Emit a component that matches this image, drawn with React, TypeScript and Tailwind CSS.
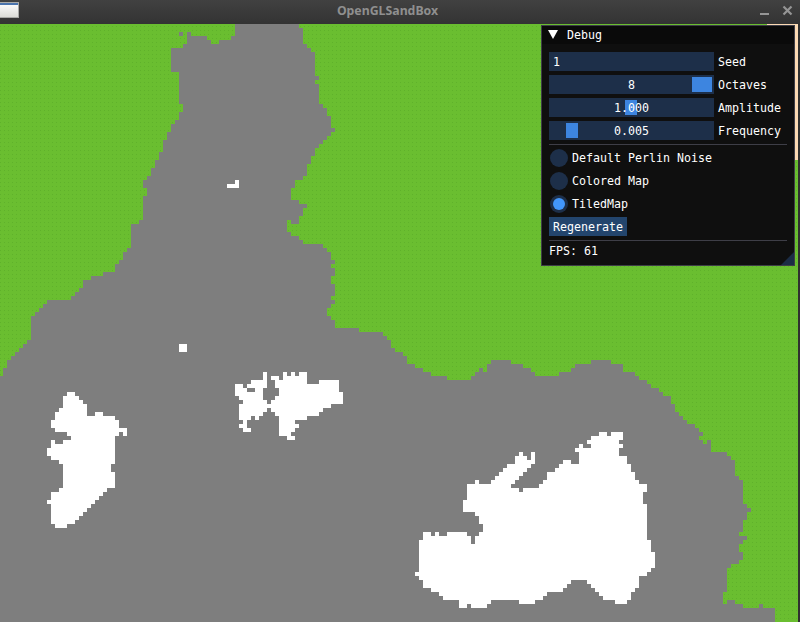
import React from "react";

const GRASS_WEST =
  "M0 24H235V36H231V40H219V44H211V40H207V36H191V32H187V44H183V48H171V72H179V104H183V112H179V120H175V124H171V132H167V140H163V152H159V160H155V168H151V176H147V180H143V188H147V196H143V220H139V224H131V248H127V252H123V260H119V264H115V272H103V276H91V280H83V288H79V292H75V296H71V300H47V304H43V308H39V312H35V316H31V340H27V344H23V348H19V352H15V356H11V360H7V368H3V376H0ZM179 32V36H183V32Z";

const GRASS_EAST =
  "M299 24V28H303V44H307V48H311V52H315V76H319V80H315V84H319V104H323V108H327V116H331V128H335V132H331V136H327V140H323V144H319V148H315V156H311V164H307V176H303V180H295V188H291V200H299V204H307V208H303V216H299V224H291V220H287V232H291V236H299V240H303V244H323V248H327V252H331V260H335V264H331V268H335V276H331V284H335V296H331V300H335V304H331V308H327V316H331V320H335V328H359V332H383V336H387V340H391V348H395V352H403V356H407V364H415V368H423V372H431V376H447V380H471V376H475V372H479V368H483V372H487V364H491V360H511V364H523V368H531V372H535V376H559V372H571V368H575V364H591V360H611V364H623V372H635V376H639V380H647V384H651V388H659V392H663V396H671V404H675V412H679V416H683V420H687V424H695V428H699V432H703V436H699V440H703V444H707V440H711V452H727V456H731V460H735V476H739V480H743V504H747V508H751V512H747V520H743V532H739V536H747V540H743V544H739V552H743V560H739V564H731V568H727V592H723V604H727V600H735V604H743V608H759V604H763V608H775V622H798V24Z";

const SNOW = [
  "M227 184H235V180H239V188H227Z",
  "M179 344H187V352H179Z",
  "M67 392H75V396H79V400H83V404H87V416H95V412H103V416H115V420H119V428H127V436H123V432H119V436H115V464H111V472H115V488H107V492H103V496H99V500H95V504H91V508H87V512H83V516H79V520H75V524H67V528H55V524H51V504H47V500H51V492H59V488H63V464H59V460H51V456H47V448H51V440H55V444H63V440H71V436H67V432H55V428H51V420H55V412H59V408H63V396H67Z",
  "M235 384H243V388H247V384H251V380H263V372H267V388H263V400H267V404H271V400H275V396H279V388H275V380H271V376H279V380H283V372H287V376H291V372H295V376H299V372H307V384H319V380H339V392H343V404H331V408H323V412H319V416H307V420H295V424H299V428H295V432H291V436H295V440H287V436H279V416H275V412H271V408H267V412H263V416H259V420H255V416H251V420H247V428H251V432H243V428H239V424H243V420H239V404H243V400H239V396H235ZM247 388V392H255V388Z",
  "M599 432H607V436H611V432H623V440H619V444H623V448H619V456H627V464H631V472H635V480H639V484H647V492H643V504H647V540H651V552H655V568H651V572H647V576H639V588H635V592H631V600H627V604H615V600H603V596H599V592H595V588H591V584H587V580H571V584H567V588H563V592H547V596H543V600H535V604H519V600H491V604H487V608H471V604H467V608H459V600H443V596H439V592H431V588H423V580H419V576H415V572H419V540H423V532H431V536H435V532H439V536H447V532H467V536H471V544H475V536H479V532H483V524H479V516H475V512H463V500H467V484H475V480H479V484H491V480H495V476H499V472H503V468H507V464H515V456H519V452H523V456H527V460H531V452H535V464H531V468H527V472H523V476H519V480H515V484H511V488H519V492H523V488H539V484H543V480H547V472H555V468H559V464H563V460H571V464H579V452H575V448H579V444H583V448H591V444H587V440H591V436H599Z",
].join("");

// One blade of grass per 4px tile, drawn as dashed rows.
const BLADE_ROWS = Array.from({ length: 149 }, (_, row) => `M0 ${26.5 + row * 4}H798`);

function TerrainMap() {
  return (
    <svg
      className="block h-[598px] w-[798px]"
      viewBox="0 24 798 598"
      shapeRendering="crispEdges"
      fillRule="evenodd"
    >
      <defs>
        <clipPath id="grass">
          <path d={GRASS_WEST} clipRule="evenodd" />
          <path d={GRASS_EAST} clipRule="evenodd" />
        </clipPath>
      </defs>
      <rect y="24" width="798" height="598" fill="#7e7e7e" />
      <path d={GRASS_WEST} fill="#6abe30" />
      <path d={GRASS_EAST} fill="#6abe30" />
      <g clipPath="url(#grass)" stroke="#5fb12b" strokeWidth="1" strokeDasharray="1 3">
        {BLADE_ROWS.map((d) => (
          <path key={d} d={d} />
        ))}
      </g>
      <path d={SNOW} fill="#ffffff" />
      <path d="M767 24H798V160H791V25H767Z" fill="#fcdab4" />
    </svg>
  );
}

function TitleBar() {
  return (
    <header className="relative flex h-6 items-center justify-center bg-linear-to-b from-[#414141] to-[#333333]">
      <div className="absolute top-[2px] left-0 h-4 w-[19px] border-t border-r border-b border-[#aaaaa8] bg-linear-to-b from-white to-[#dcdcd8]">
        <div className="h-[2px] bg-[#4b74ad]" />
      </div>
      <h1 className="relative top-[-1px] left-[-12.5px] font-['Noto_Sans',sans-serif] text-[12.3px] leading-none font-bold text-[#8f8f8f]">
        OpenGLSandBox
      </h1>
      <svg className="absolute top-0 right-0 h-6 w-10" viewBox="0 0 40 24">
        <path d="M0 13H9V15H0Z" fill="#959595" />
        <path d="M23.5 6.5L31.5 14.5M31.5 6.5L23.5 14.5" stroke="#959595" strokeWidth="2.2" />
      </svg>
    </header>
  );
}

function SliderRow({ label, value, grab }: { label: string; value: string; grab: string }) {
  return (
    <div className="flex h-[19px] items-center gap-1">
      <div className="relative flex h-[19px] w-[165px] items-center justify-center bg-[#1d2f49]">
        <div className={`absolute top-[2px] h-[15px] bg-[#3d85e0] ${grab}`} />
        <span className="relative pt-[2px]">{value}</span>
      </div>
      <span className="pt-[2px]">{label}</span>
    </div>
  );
}

function Radio({ label, checked = false }: { label: string; checked?: boolean }) {
  return (
    <div className="flex h-[19px] items-center gap-1">
      <div className="flex size-[19px] items-start justify-start pl-px">
        <div className="flex size-[18px] items-center justify-center rounded-full bg-[#1d2f49]">
          {checked && <div className="size-3 rounded-full bg-[#4296fa]" />}
        </div>
      </div>
      <span>{label}</span>
    </div>
  );
}

function DebugPanel() {
  return (
    <section className="absolute top-[25px] left-[541px] h-[241px] w-[254px] border border-[#3e3e47] bg-[#0f0f0f] font-['DejaVu_Sans_Mono',monospace] text-[11.63px] leading-[13px] whitespace-pre text-white">
      <div className="flex h-[18px] items-center bg-[#0a0a0a] pl-[6px]">
        <svg className="mb-[2px] h-[9px] w-[10px]" viewBox="0 0 10 9">
          <path d="M0 0H10L5 9Z" fill="#fff" />
        </svg>
        <span className="ml-[9px]">Debug</span>
      </div>
      <div className="flex flex-col gap-1 px-[7px] pt-2">
        <div className="flex h-[19px] items-center gap-1">
          <div className="flex h-[19px] w-[165px] items-center bg-[#1d2f49] pt-[2px] pl-1">1</div>
          <span className="pt-[2px]">Seed</span>
        </div>
        <SliderRow label="Octaves" value="8" grab="left-[143px] w-5" />
        <SliderRow label="Amplitude" value="1.000" grab="left-[76px] w-3" />
        <SliderRow label="Frequency" value="0.005" grab="left-[17px] w-3" />
        <div className="h-px w-[238px] bg-[#3e3e47]" />
        <Radio label="Default Perlin Noise" />
        <Radio label="Colored Map" />
        <Radio label="TiledMap" checked />
        <button className="-mt-px flex h-[19px] w-[78px] items-center justify-center bg-[#23456d] pt-[2px]">
          Regenerate
        </button>
        <div className="h-px w-[238px] bg-[#3e3e47]" />
        <div>FPS: 61</div>
      </div>
      <svg className="absolute right-0 bottom-0 size-[13px]" viewBox="0 0 13 13">
        <path d="M13 0V13H0Z" fill="#1b2c45" />
      </svg>
    </section>
  );
}

export default function App() {
  return (
    <main className="relative h-[622px] w-[800px] overflow-hidden bg-[#303030]">
      <TitleBar />
      <TerrainMap />
      <DebugPanel />
    </main>
  );
}
